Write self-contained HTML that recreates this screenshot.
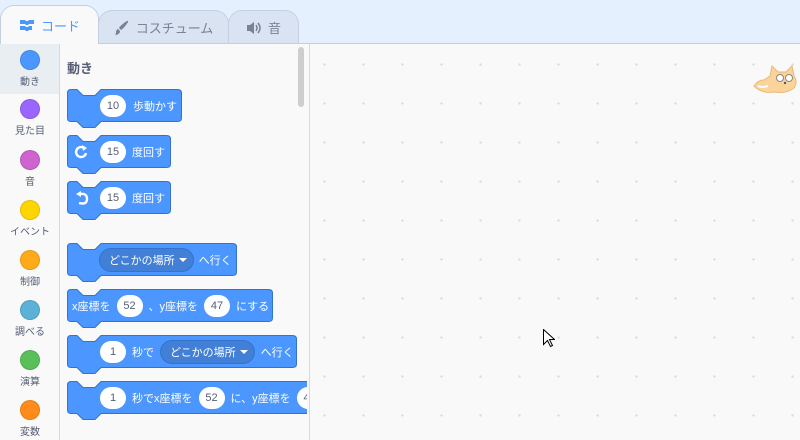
<!DOCTYPE html>
<html><head><meta charset="utf-8"><style>
*{margin:0;padding:0;box-sizing:border-box}
body{width:800px;height:440px;overflow:hidden;background:#e5f0ff;font-family:"Liberation Sans","Noto Sans CJK JP",sans-serif;position:relative}
.abs{position:absolute}
.tab{position:absolute;border:1px solid #c4d0e2;border-bottom:none;border-radius:14px 14px 0 0;background:#d9e3f2;color:#7a8296;font-size:13px;display:flex;align-items:center;justify-content:center;gap:6px}
.cat{position:absolute;left:0;width:60px;text-align:center;font-size:10px;color:#575e75}
.cat i{display:block;width:20px;height:20px;border-radius:50%;margin:0 auto 3px;border:1px solid rgba(0,0,0,.12)}
.blk{position:absolute;left:67px;height:40px}
.blk>svg{position:absolute;left:0;top:0}
.bt{position:absolute;top:0;height:33px;display:flex;align-items:center;color:#fff;font-size:11px;white-space:nowrap;gap:6px}
.pill{background:#fff;color:#575e75;border-radius:11px;height:22px;min-width:26px;padding:0 6px;display:inline-flex;align-items:center;justify-content:center;font-size:11px}
.dd{background:#4280d7;border:1px solid #3373cc;border-radius:12px;height:24px;padding:0 6px 0 9px;display:inline-flex;align-items:center;color:#fff;gap:4px}
.dd:after{content:"";border:4px solid transparent;border-top:4px solid #fff;margin-top:4px}
</style></head><body>
<div class="tab" style="left:0;top:5px;width:99px;height:39px;background:#f9f9f9;color:#4c97ff;z-index:2">
<svg width="16" height="12" viewBox="0 0 16 12"><path d="M1 1h5l1 1h2l1-1h5v4h-5l-1 1h-2l-1-1H1zM1 7h5l1 1h2l1-1h3v4h-3l-1 1H7l-1-1H1z" fill="#4c97ff"/></svg>コード</div>
<div class="tab" style="left:98px;top:10px;width:131px;height:34px">
<svg width="16" height="16" viewBox="0 0 16 16"><path d="M14 1c1 1-5 8-7 9l-2-2c1-2 8-8 9-7zM4 9l2 2c0 3-3 4-5 4 1-1 1-2 1-3s1-3 2-3z" fill="#7a8296"/></svg>コスチューム</div>
<div class="tab" style="left:228px;top:10px;width:71px;height:34px">
<svg width="16" height="14" viewBox="0 0 16 14"><path d="M1 4h3l4-3v12l-4-3H1z" fill="#7a8296"/><path d="M10 4q2 3 0 6M12 2q4 5 0 10" stroke="#7a8296" stroke-width="1.5" fill="none"/></svg>音</div>
<div class="abs" style="left:0;top:43px;width:800px;height:1px;background:#c4d0e2"></div>
<div class="abs" style="left:0;top:44px;width:60px;height:396px;background:#f9f9f9;border-right:1px solid #d9d9d9"></div>
<div class="abs" style="left:0;top:44px;width:59px;height:50px;background:#e9eef2"></div>
<div class="cat" style="top:50px"><i style="background:#4c97ff"></i>動き</div>
<div class="cat" style="top:99px"><i style="background:#9966ff"></i>見た目</div>
<div class="cat" style="top:150px"><i style="background:#cf63cf"></i>音</div>
<div class="cat" style="top:200px"><i style="background:#ffd500"></i>イベント</div>
<div class="cat" style="top:250px"><i style="background:#ffab19"></i>制御</div>
<div class="cat" style="top:300px"><i style="background:#5cb1d6"></i>調べる</div>
<div class="cat" style="top:350px"><i style="background:#59c059"></i>演算</div>
<div class="cat" style="top:400px"><i style="background:#ff8c1a"></i>変数</div>
<div class="abs" style="left:60px;top:44px;width:250px;height:396px;background:#f9f9f9;border-right:1px solid #d9d9d9"></div>
<div class="abs" style="left:298px;top:47px;width:6px;height:60px;border-radius:3px;background:#cecece"></div>
<div class="abs" style="left:67px;top:58px;font-size:13px;color:#575e75;font-weight:bold">動き</div>
<div class="abs" style="left:310px;top:44px;width:490px;height:396px;background-color:#f9f9f9;background-image:radial-gradient(circle,#d8d8d8 1px,transparent 1.3px);background-size:39px 39px;background-position:-5px 1px"></div>

<div class="blk" style="top:89px;width:115px"><svg width="115" height="40"><path d="M0.5 4Q0.5 0.5 4 0.5H10l6 6h12l6-6H110.5Q114.5 0.5 114.5 4V29Q114.5 32.5 110.5 32.5H34l-6 6H16l-6-6H4Q0.5 32.5 0.5 29Z" fill="#4c97ff" stroke="#3373cc"/></svg>
<div class="bt" style="left:33px;gap:7px"><span class="pill">10</span>歩動かす</div></div>

<div class="blk" style="top:135px;width:104px"><svg width="104" height="40"><path d="M0.5 4Q0.5 0.5 4 0.5H10l6 6h12l6-6H99.5Q103.5 0.5 103.5 4V29Q103.5 32.5 99.5 32.5H34l-6 6H16l-6-6H4Q0.5 32.5 0.5 29Z" fill="#4c97ff" stroke="#3373cc"/></svg>
<div class="bt" style="left:7px"><svg width="16" height="16" viewBox="0 0 16 16"><path d="M12 9A5 5 0 1 1 10 4" stroke="#fff" stroke-width="2.4" fill="none"/><path d="M8 1l5 3-4 3z" fill="#fff"/></svg><span class="pill" style="margin-left:4px">15</span>度回す</div></div>

<div class="blk" style="top:181px;width:104px"><svg width="104" height="40"><path d="M0.5 4Q0.5 0.5 4 0.5H10l6 6h12l6-6H99.5Q103.5 0.5 103.5 4V29Q103.5 32.5 99.5 32.5H34l-6 6H16l-6-6H4Q0.5 32.5 0.5 29Z" fill="#4c97ff" stroke="#3373cc"/></svg>
<div class="bt" style="left:7px"><svg width="16" height="16" viewBox="0 0 16 16"><path d="M6 4Q13 3 13 9T5 13" stroke="#fff" stroke-width="2.4" fill="none"/><path d="M2 4l5-3v6z" fill="#fff"/></svg><span class="pill" style="margin-left:4px">15</span>度回す</div></div>

<div class="blk" style="top:243px;width:170px"><svg width="170" height="40"><path d="M0.5 4Q0.5 0.5 4 0.5H10l6 6h12l6-6H165.5Q169.5 0.5 169.5 4V29Q169.5 32.5 165.5 32.5H34l-6 6H16l-6-6H4Q0.5 32.5 0.5 29Z" fill="#4c97ff" stroke="#3373cc"/></svg>
<div class="bt" style="left:32px;gap:5px"><span class="dd">どこかの場所</span>へ行く</div></div>

<div class="blk" style="top:289px;width:206px"><svg width="206" height="40"><path d="M0.5 4Q0.5 0.5 4 0.5H10l6 6h12l6-6H201.5Q205.5 0.5 205.5 4V29Q205.5 32.5 201.5 32.5H34l-6 6H16l-6-6H4Q0.5 32.5 0.5 29Z" fill="#4c97ff" stroke="#3373cc"/></svg>
<div class="bt" style="left:5px">x座標を<span class="pill">52</span>、y座標を<span class="pill">47</span>にする</div></div>

<div class="blk" style="top:335px;width:230px"><svg width="230" height="40"><path d="M0.5 4Q0.5 0.5 4 0.5H10l6 6h12l6-6H225.5Q229.5 0.5 229.5 4V29Q229.5 32.5 225.5 32.5H34l-6 6H16l-6-6H4Q0.5 32.5 0.5 29Z" fill="#4c97ff" stroke="#3373cc"/></svg>
<div class="bt" style="left:33px"><span class="pill">1</span>秒で<span class="dd">どこかの場所</span>へ行く</div></div>

<div class="blk" style="top:381px;width:240px;overflow:hidden"><svg width="260" height="40"><path d="M0.5 4Q0.5 0.5 4 0.5H10l6 6h12l6-6H255Q259 0.5 259 4V29Q259 32.5 255 32.5H34l-6 6H16l-6-6H4Q0.5 32.5 0.5 29Z" fill="#4c97ff" stroke="#3373cc"/></svg>
<div class="bt" style="left:33px"><span class="pill">1</span>秒でx座標を<span class="pill">52</span>に、y座標を<span class="pill">47</span></div></div>

<svg class="abs" style="left:752px;top:62px" width="48" height="32" viewBox="0 0 48 32"><path d="M2 24q4-6 10-6l6-4 2-10 6 6h8l6-6 2 10q4 6 0 12-8 6-20 4-12 2-20-6z" fill="#fbd49a" stroke="#e8b97a"/><circle cx="28" cy="16" r="3.5" fill="#fff" stroke="#888"/><circle cx="37" cy="16" r="3.5" fill="#fff" stroke="#888"/><circle cx="33" cy="21" r="1.2" fill="#555"/><path d="M6 24q4 2 10 0" stroke="#fff" stroke-width="2" fill="none"/></svg>
<svg class="abs" style="left:543px;top:329px" width="12" height="19" viewBox="0 0 12 19"><path d="M0.5 0.5v15l4-4 3 6 2-1-3-6h5z" fill="#fff" stroke="#000"/></svg>
</body></html>
